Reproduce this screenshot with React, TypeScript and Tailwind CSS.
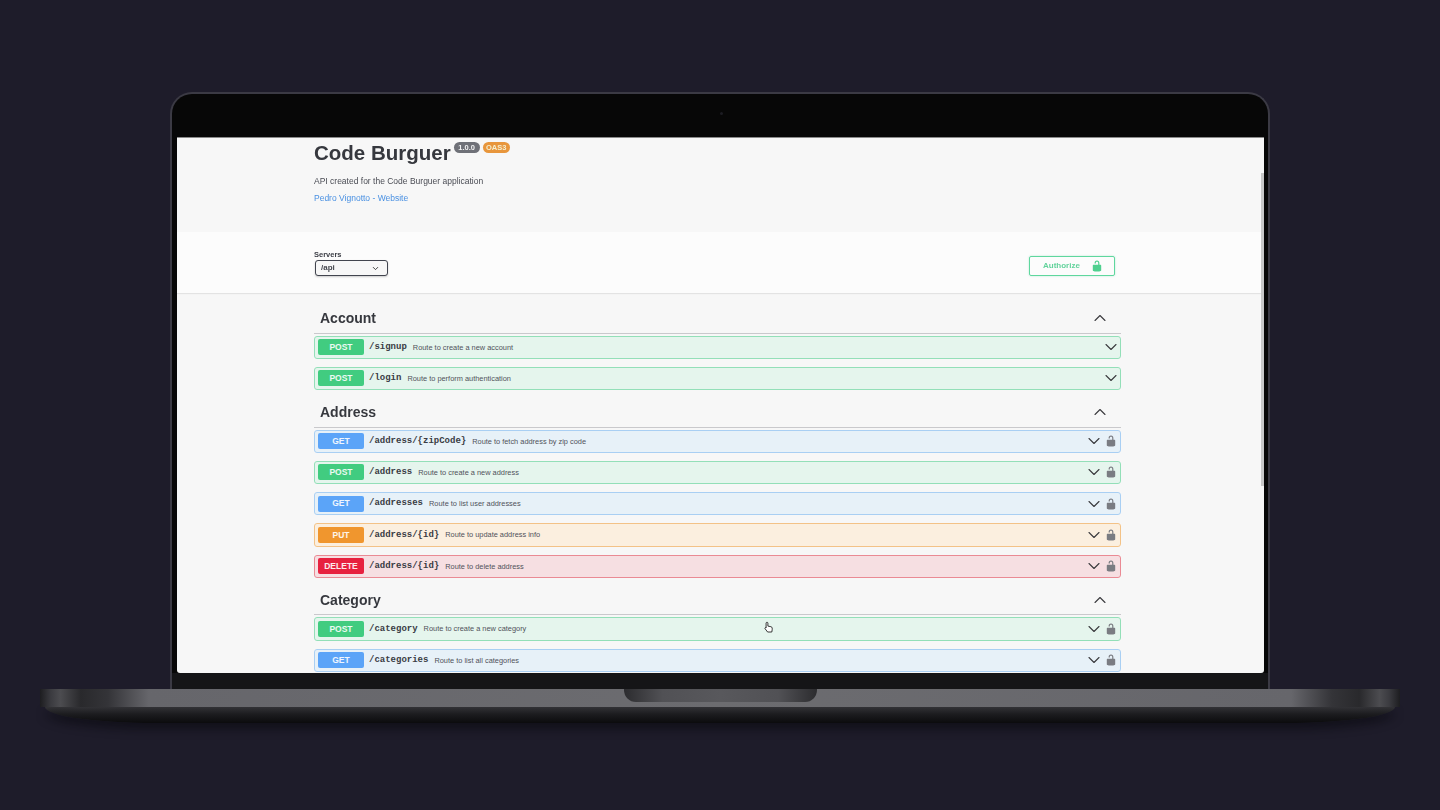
import { ChevronDown, ChevronUp } from "lucide-react";

type Method = "POST" | "GET" | "PUT" | "DELETE";

const methodStyles: Record<Method, { row: string; badge: string }> = {
  POST: { row: "bg-[#e5f5ed] border-[#93dfb8]", badge: "bg-[#41cc80]" },
  GET: { row: "bg-[#e7f1f8] border-[#a9cff3]", badge: "bg-[#5ba4f8]" },
  PUT: { row: "bg-[#fbefdf] border-[#f3c287]", badge: "bg-[#f0962e]" },
  DELETE: { row: "bg-[#f6dfe2] border-[#ea8a94]", badge: "bg-[#e7213f]" },
};

const sections: {
  title: string;
  rows: { method: Method; path: string; desc: string; lock?: boolean }[];
}[] = [
  {
    title: "Account",
    rows: [
      { method: "POST", path: "/signup", desc: "Route to create a new account" },
      { method: "POST", path: "/login", desc: "Route to perform authentication" },
    ],
  },
  {
    title: "Address",
    rows: [
      { method: "GET", path: "/address/{zipCode}", desc: "Route to fetch address by zip code", lock: true },
      { method: "POST", path: "/address", desc: "Route to create a new address", lock: true },
      { method: "GET", path: "/addresses", desc: "Route to list user addresses", lock: true },
      { method: "PUT", path: "/address/{id}", desc: "Route to update address info", lock: true },
      { method: "DELETE", path: "/address/{id}", desc: "Route to delete address", lock: true },
    ],
  },
  {
    title: "Category",
    rows: [
      { method: "POST", path: "/category", desc: "Route to create a new category", lock: true },
      { method: "GET", path: "/categories", desc: "Route to list all categories", lock: true },
    ],
  },
];

function LockIcon({ size, className }: { size: number; className: string }) {
  return (
    <svg width={size} height={size} viewBox="0 0 20 20" className={className} fill="currentColor">
      <path d="M15.8 8H14V5.6C14 2.703 12.665 1 10 1 7.334 1 6 2.703 6 5.6V6h2v-.801C8 3.754 8.797 3 10 3c1.203 0 2 .754 2 2.199V8H4c-.553 0-1 .646-1 1.199V17c0 .549.428 1.139.951 1.307l1.197.387C5.672 18.861 6.55 19 7.1 19h5.8c.549 0 1.428-.139 1.951-.307l1.196-.387c.524-.167.953-.757.953-1.306V9.199C17 8.646 16.352 8 15.8 8z" />
    </svg>
  );
}

function OpRow({ method, path, desc, lock }: { method: Method; path: string; desc: string; lock?: boolean }) {
  const s = methodStyles[method];
  return (
    <div className={`flex h-[23.25px] items-center rounded-[3px] border-[1.5px] pl-[3px] pr-[3px] ${s.row}`}>
      <span className={`flex h-[16px] w-[46px] shrink-0 items-center justify-center rounded-[2px] text-[8.5px] font-bold text-white/90 ${s.badge}`}>
        {method}
      </span>
      <span className="ml-[5px] mt-[1px] font-['Liberation_Mono',monospace] text-[9px] font-bold text-[#3a3c44]">{path}</span>
      <span className="ml-[6px] text-[7.4px] text-[#50525a]">{desc}</span>
      <div className={`ml-auto flex items-center ${lock ? "gap-px" : "-mr-[4px]"}`}>
        <ChevronDown size={20} strokeWidth={1.3} className="text-[#3a3a3e]" />
        {lock && <LockIcon size={12} className="text-[#7a7c82]" />}
      </div>
    </div>
  );
}

export default function App() {
  return (
    <div className="flex h-[810px] w-full flex-col items-center overflow-hidden bg-[#1e1c2a] pt-[92px] font-['Liberation_Sans',Arial,sans-serif]">
      {/* lid */}
      <div className="relative h-[597px] w-[1100px] shrink-0 overflow-hidden rounded-t-[22px] border-x-2 border-t-2 border-[#3b3a44] bg-[#070707] pl-[5px] pr-[4px] pt-[43px]">
        <div className="absolute left-[548px] top-[18px] h-[3px] w-[3px] rounded-full bg-[#1c1c22]" />
        <div className="absolute bottom-0 left-0 right-0 h-[16px] bg-[#151517]" />

        {/* screen */}
        <div className="relative h-[536px] overflow-hidden rounded-b-[3px] border-t border-[#8a8a8a] bg-[#f7f7f7] text-[#44464d] [filter:blur(0.6px)]">
          <div className="absolute right-0 top-[35px] h-[313px] w-[3px] bg-[#c8c8c8]" />

          <div className="h-[94px] pl-[137px] pt-[2px]">
            <div className="flex items-start">
              <h1 className="text-[20.5px] font-bold leading-[26px] text-[#36383e]">Code Burguer</h1>
              <span className="ml-[3px] mt-[2px] flex h-[11px] w-[26px] items-center justify-center rounded-full bg-[#6f7178] text-[7.5px] font-bold text-white/90">
                1.0.0
              </span>
              <span className="ml-[3px] mt-[2px] flex h-[11px] w-[27px] items-center justify-center rounded-full bg-[#e8963c] text-[7.5px] font-bold text-[#f4efd0]">
                OAS3
              </span>
            </div>
            <p className="mt-[9px] text-[8.5px] leading-[12px] text-[#4a4c54]">API created for the Code Burguer application</p>
            <p className="mt-[5px] text-[8.5px] leading-[12px] text-[#4990e2]">Pedro Vignotto - Website</p>
          </div>

          <div className="flex h-[61px] items-end justify-between bg-[#fcfcfc] pb-[17px] pl-[137px] pr-[149px] shadow-[0_1px_1px_rgba(0,0,0,0.08)]">
            <div>
              <div className="text-[7.5px] font-bold leading-[8px] text-[#3a3c44]">Servers</div>
              <div className="ml-px mt-[1px] flex h-[16px] w-[73px] items-center justify-between rounded-[3px] border-[1.5px] border-[#41444e] bg-[#f7f7f7] pl-[5px] pr-[7px] shadow-[0_1px_2px_rgba(0,0,0,0.2)]">
                <span className="text-[8px] font-bold">/api</span>
                <ChevronDown size={9} strokeWidth={2.4} className="text-[#333]" />
              </div>
            </div>
            <div className="flex h-[20px] w-[86px] items-center justify-between rounded-[2px] border-[1.5px] border-[#5fd79e] pl-[13px] pr-[11px] shadow-[0_0_2px_rgba(73,204,144,0.4)]">
              <span className="text-[8px] font-bold text-[#63d39c]">Authorize</span>
              <LockIcon size={12} className="text-[#4fd08f]" />
            </div>
          </div>

          <div className="ml-[137px] mt-[3px] w-[807px]">
            {sections.map((section) => (
              <div key={section.title}>
                <div className="flex h-[37.5px] items-center justify-between border-b border-[#c9c9cc] pl-[6px] pr-[11px] pt-[8px]">
                  <h3 className="text-[14px] font-bold text-[#36383e]">{section.title}</h3>
                  <ChevronUp size={20} strokeWidth={1.3} className="-mt-[1px] text-[#3a3a3e]" />
                </div>
                <div className="mt-[2px] flex flex-col gap-[8px]">
                  {section.rows.map((row) => (
                    <OpRow key={row.method + row.path} {...row} />
                  ))}
                </div>
              </div>
            ))}
          </div>

          {/* mouse pointer */}
          <svg width="10" height="12" viewBox="0 0 10 12" className="absolute left-[587px] top-[483px]">
            <path
              d="M3 1.2c.5 0 .9.4.9.9v3l3 .6c.8.2 1.3.7 1.3 1.4v1.6L7.800 11H3.600L1 7.600c-.4-.6.400-1.300 1-.8l.1.200V2.100c0-.5.400-.9.900-.9z"
              fill="#fff"
              stroke="#222"
              strokeWidth="0.9"
            />
          </svg>
        </div>
      </div>

      {/* base */}
      <div className="relative h-[18px] w-[1360px] shrink-0 bg-[linear-gradient(90deg,#1d1d20_0%,#3b3b40_0.8%,#4c4c50_1.5%,#29292c_3%,#343438_5%,#66666b_8%,#6c6c70_50%,#66666b_92%,#343438_95%,#29292c_97%,#4c4c50_98.500%,#3b3b40_99.2%,#1d1d20_100%)]">
        <div className="absolute left-[584px] top-0 h-[13px] w-[193px] rounded-b-[12px] bg-[linear-gradient(90deg,#2c2c2f,#515155_20%,#58585c_50%,#515155_80%,#2c2c2f)]" />
      </div>
      <div className="h-[16px] w-[1350px] shrink-0 rounded-b-[110px_16px] bg-[linear-gradient(180deg,#323236_0%,#1c1c1f_45%,#0b0b0d_100%)] shadow-[0_6px_10px_rgba(8,8,12,0.55)]" />
    </div>
  );
}
